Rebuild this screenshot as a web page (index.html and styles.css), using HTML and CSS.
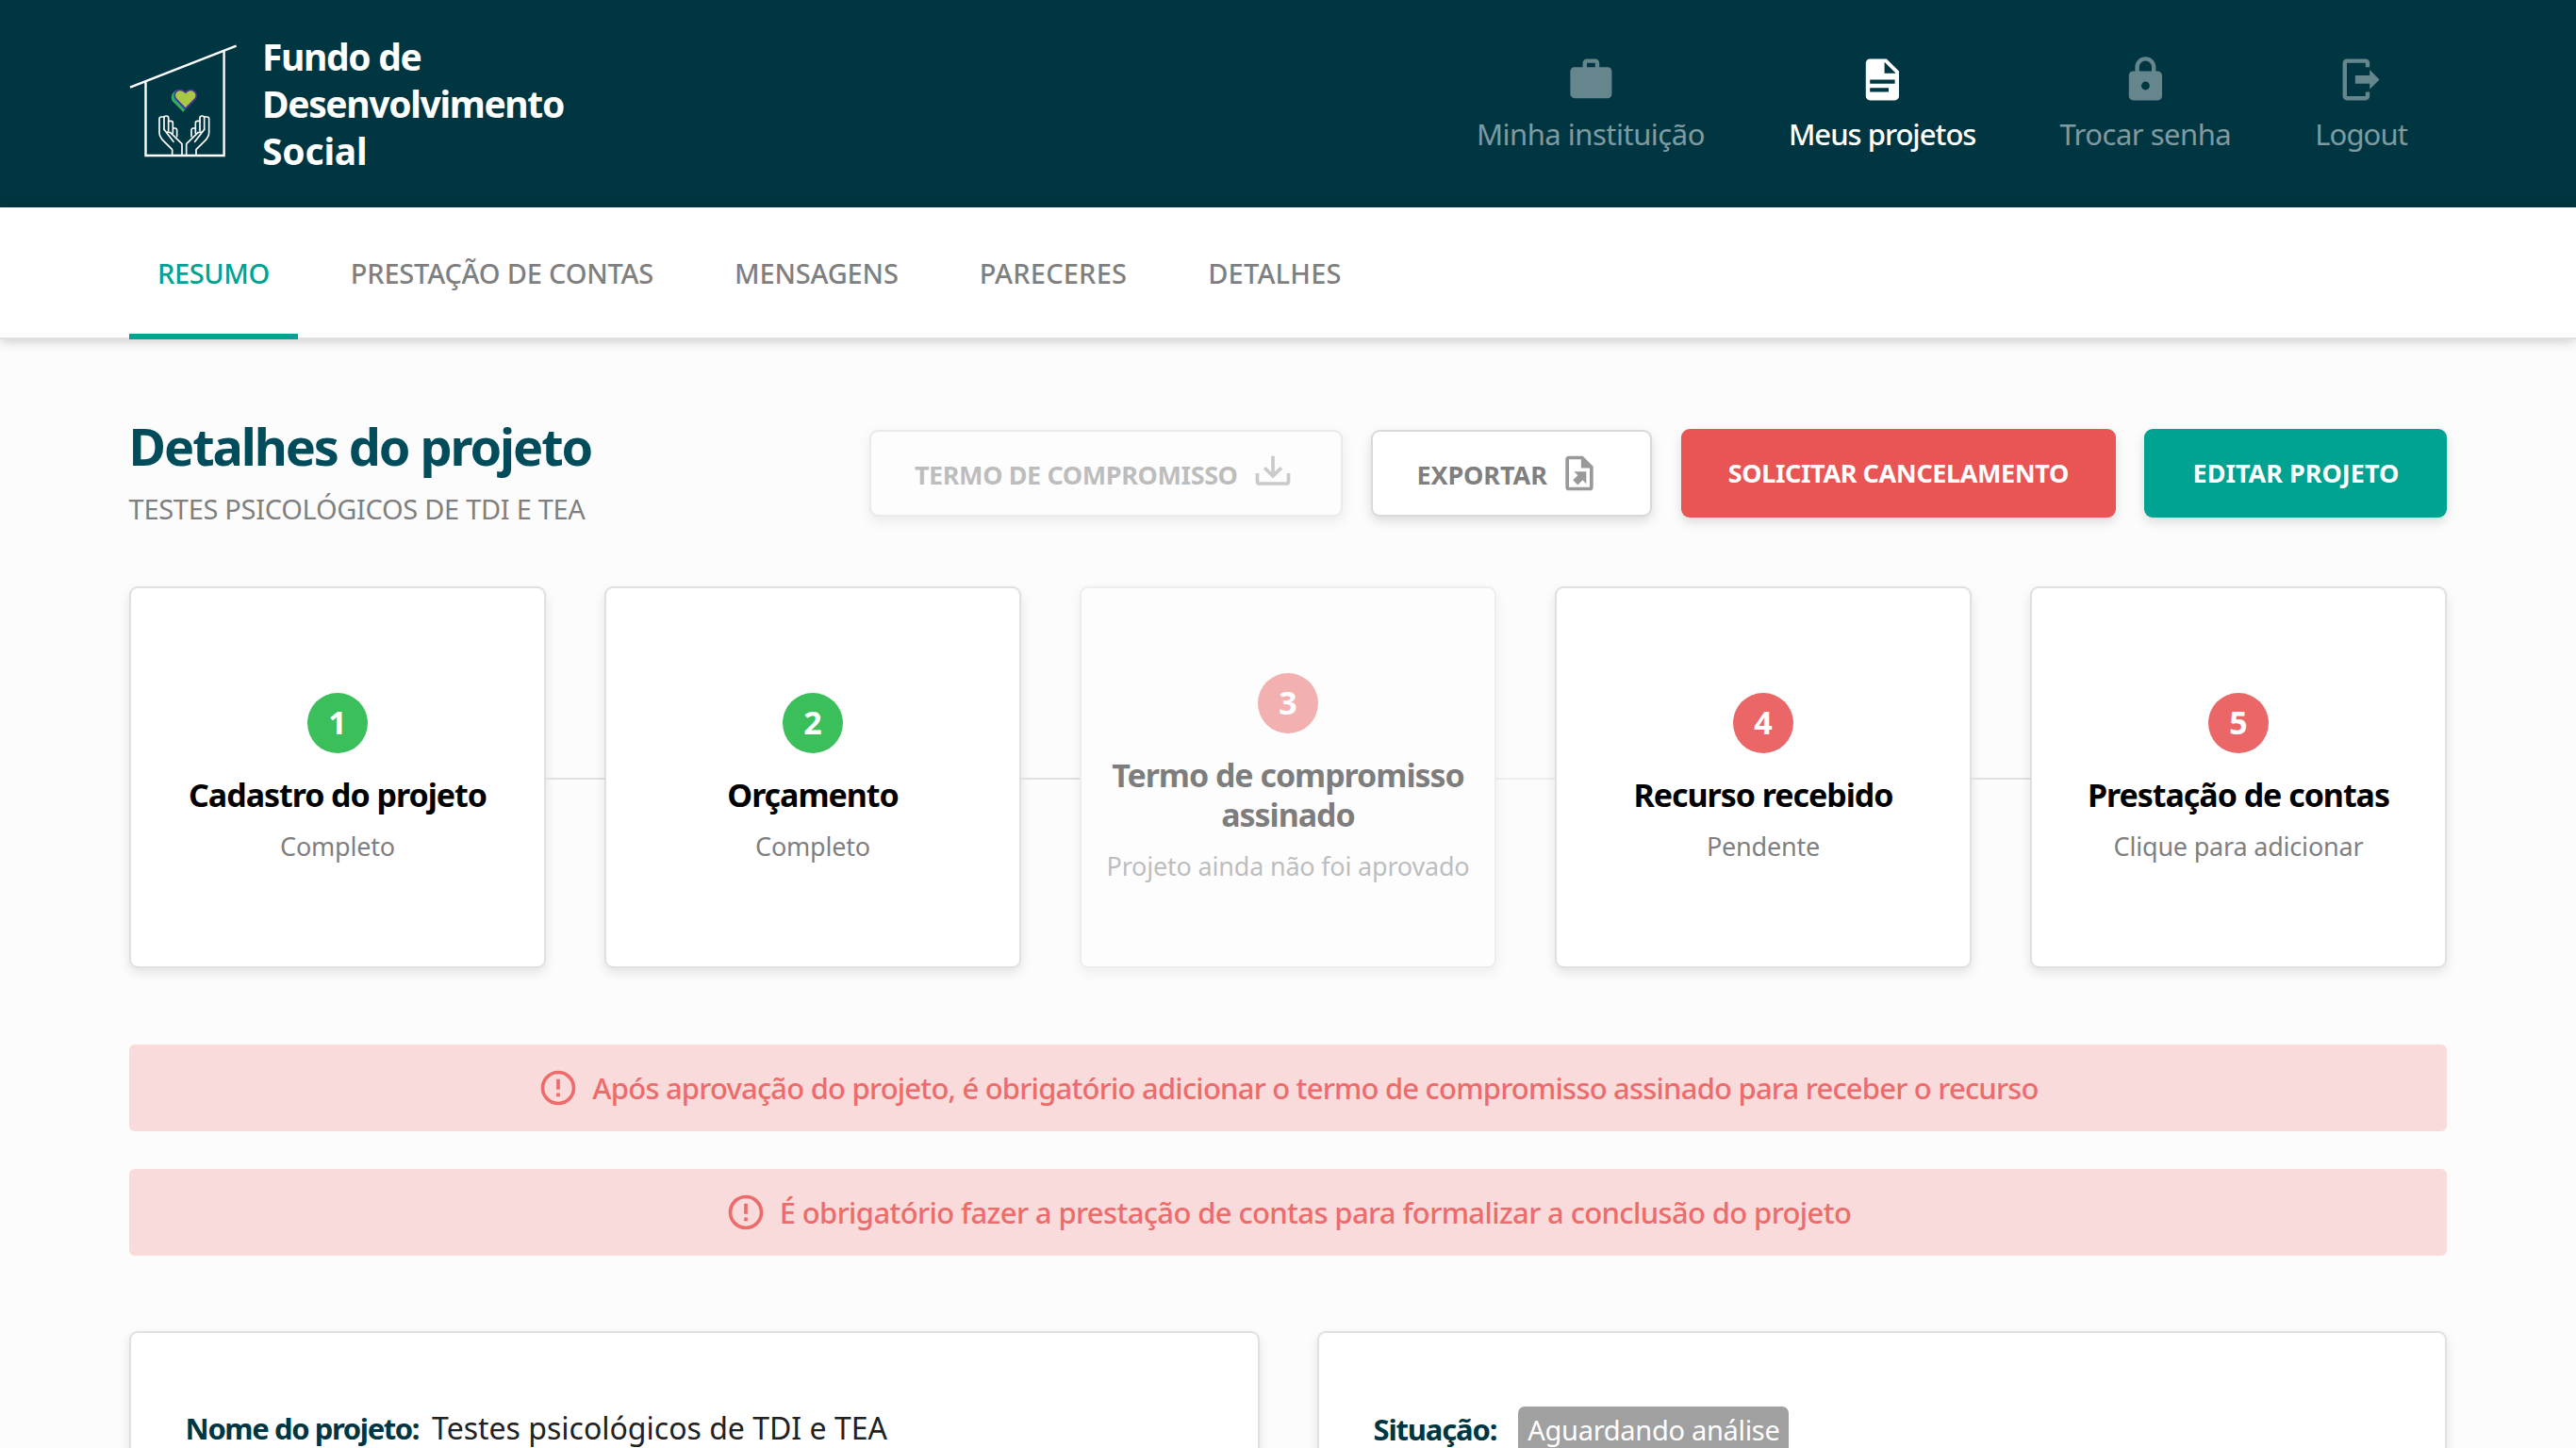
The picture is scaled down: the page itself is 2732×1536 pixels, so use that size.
FILE: index.html
```html
<!DOCTYPE html>
<html lang="pt-BR">
<head>
  <meta charset="utf-8">
  <title>Fundo de Desenvolvimento Social</title>
  <link rel="stylesheet" href="styles.css">
</head>
<body>
  <header class="topbar">
    <a class="brand">
      <svg class="brand-mark" viewBox="136 40 120 140" fill="none" stroke="#fff">
        <path stroke-width="2.4" d="M138 92.7L250.6 48.6M154.5 87V165H237.6V54"/>
        <path d="M194.500 119L182.500 107C180 101 184 96 189 96L203 100Z" fill="#3fae49" stroke="none"/>
        <path d="M195.500 117.500L184 105.500C181.500 99 186 95 190 95L204 100Z" fill="#19a79c" stroke="none"/>
        <path d="M196.700 115.500L186.500 105C182.500 99 189 91.500 196.700 98C204 91.500 211 99 207 105Z" fill="#a9c843" stroke="#47349a" stroke-width="1.800"/>
        <g transform="translate(120 20) scale(.33333)" stroke-width="5" stroke-linejoin="round" stroke-linecap="round">
          <g id="hand">
            <path d="M188 432V416L160 388Q147 374 147 362V318Q147 312 154 312H162"/>
            <path d="M162 352V315Q162 309 169 309Q176 309 176 315V356"/>
            <path d="M162 352L192 391M176 325H183Q190 325 190 331V364M190 348H197Q203 349 203 355V374M172 360L182 362L219 398V432"/>
          </g>
          <use href="#hand" transform="translate(452 0) scale(-1 1)"/>
        </g>
      </svg>
      <span class="brand-name"><span>Fundo de</span><span>Desenvolvimento</span><span class="brand-last">Social</span></span>
    </a>
    <nav class="menu">
      <a class="menu-item">
        <svg viewBox="0 0 24 24"><path d="M10,2H14A2,2 0 0,1 16,4V6H20A2,2 0 0,1 22,8V19A2,2 0 0,1 20,21H4C2.89,21 2,20.1 2,19V8C2,6.89 2.89,6 4,6H8V4C8,2.89 8.89,2 10,2M14,6V4H10V6H14Z"/></svg>
        <span>Minha instituição</span>
      </a>
      <a class="menu-item active">
        <svg viewBox="0 0 24 24"><path d="M13,9H18.5L13,3.5V9M6,2H14L20,8V20A2,2 0 0,1 18,22H6C4.89,22 4,21.1 4,20V4C4,2.89 4.89,2 6,2M15,18V16H6V18H15M18,14V12H6V14H18Z"/></svg>
        <span>Meus projetos</span>
      </a>
      <a class="menu-item">
        <svg viewBox="0 0 24 24"><path d="M12,17A2,2 0 0,0 14,15C14,13.89 13.1,13 12,13A2,2 0 0,0 10,15A2,2 0 0,0 12,17M18,8A2,2 0 0,1 20,10V20A2,2 0 0,1 18,22H6A2,2 0 0,1 4,20V10C4,8.89 4.89,8 6,8H7V6A5,5 0 0,1 12,1A5,5 0 0,1 17,6V8H18M12,3A3,3 0 0,0 9,6V8H15V6A3,3 0 0,0 12,3Z"/></svg>
        <span>Trocar senha</span>
      </a>
      <a class="menu-item menu-logout">
        <svg viewBox="0 0 24 24"><path d="M16,16.700V14H9V10H16V7.300L20.700,12L16,16.700M14,2A2,2 0 0,1 16,4V6H14V4H5V20H14V18H16V20A2,2 0 0,1 14,22H5A2,2 0 0,1 3,20V4A2,2 0 0,1 5,2H14Z"/></svg>
        <span>Logout</span>
      </a>
    </nav>
  </header>

  <nav class="tabs">
    <a class="tab selected">RESUMO</a>
    <a class="tab">PRESTAÇÃO DE CONTAS</a>
    <a class="tab">MENSAGENS</a>
    <a class="tab wide">PARECERES</a>
    <a class="tab wide">DETALHES</a>
  </nav>

  <main class="page">
    <section class="heading">
      <div>
        <h1>Detalhes do projeto</h1>
        <p class="subtitle">TESTES PSICOLÓGICOS DE TDI E TEA</p>
      </div>
      <div class="actions">
        <button class="btn outlined btn-termo" disabled>
          <span>TERMO DE COMPROMISSO</span>
          <svg viewBox="0 0 24 24"><path d="M2 12H4V17H20V12H22V17C22 18.11 21.11 19 20 19H4C2.900 19 2 18.110 2 17V12M12 15L17.550 9.540L16.130 8.130L13 11.250V2H11V11.250L7.880 8.130L6.460 9.550L12 15Z"/></svg>
        </button>
        <button class="btn outlined btn-exportar">
          <span>EXPORTAR</span>
          <svg viewBox="0 0 24 24"><path d="M14,2H6A2,2 0 0,0 4,4V20A2,2 0 0,0 6,22H18A2,2 0 0,0 20,20V8L14,2M18,20H6V4H13V9H18V20M16,11V18.100L13.900,16L11.100,18.800L8.300,16L11.100,13.200L8.900,11H16Z"/></svg>
        </button>
        <button class="btn danger">SOLICITAR CANCELAMENTO</button>
        <button class="btn primary">EDITAR PROJETO</button>
      </div>
    </section>

    <section class="steps">
      <article class="card step done"><b class="number">1</b><h2>Cadastro do projeto</h2><p>Completo</p></article>
      <i class="link"></i>
      <article class="card step done"><b class="number">2</b><h2>Orçamento</h2><p>Completo</p></article>
      <i class="link"></i>
      <article class="card step disabled"><b class="number">3</b><h2>Termo de compromisso assinado</h2><p>Projeto ainda não foi aprovado</p></article>
      <i class="link faint"></i>
      <article class="card step"><b class="number">4</b><h2>Recurso recebido</h2><p>Pendente</p></article>
      <i class="link"></i>
      <article class="card step"><b class="number">5</b><h2>Prestação de contas</h2><p>Clique para adicionar</p></article>
    </section>

    <section class="alerts">
      <div class="alert alert-term">
        <svg viewBox="0 0 24 24"><path d="M11,15H13V17H11V15M11,7H13V13H11V7M12,2C6.470,2 2,6.500 2,12A10,10 0 0,0 12,22A10,10 0 0,0 22,12A10,10 0 0,0 12,2M12,20A8,8 0 0,1 4,12A8,8 0 0,1 12,4A8,8 0 0,1 20,12A8,8 0 0,1 12,20Z"/></svg>
        <span>Após aprovação do projeto, é obrigatório adicionar o termo de compromisso assinado para receber o recurso</span>
      </div>
      <div class="alert">
        <svg viewBox="0 0 24 24"><path d="M11,15H13V17H11V15M11,7H13V13H11V7M12,2C6.470,2 2,6.500 2,12A10,10 0 0,0 12,22A10,10 0 0,0 22,12A10,10 0 0,0 12,2M12,20A8,8 0 0,1 4,12A8,8 0 0,1 12,4A8,8 0 0,1 20,12A8,8 0 0,1 12,20Z"/></svg>
        <span>É obrigatório fazer a prestação de contas para formalizar a conclusão do projeto</span>
      </div>
    </section>

    <section class="details">
      <div class="card detail">
        <span class="label">Nome do projeto:</span>
        <span class="value">Testes psicológicos de TDI e TEA</span>
      </div>
      <div class="card detail">
        <span class="label label-status">Situação:</span>
        <span class="badge">Aguardando análise</span>
      </div>
    </section>
  </main>
</body>
</html>
```
FILE: styles.css
```css
* { box-sizing: border-box; }

body {
  margin: 0;
  height: 1536px;
  overflow: hidden;
  background: #fcfcfc;
  color: #212121;
  font-family: "Noto Sans", "Open Sans", sans-serif;
}

h1, h2, p { margin: 0; }
svg { display: block; flex: none; }

/* Header */
.topbar {
  display: flex;
  align-items: center;
  justify-content: space-between;
  height: 220px;
  padding: 0 136px;
  background: #003641;
  color: #fff;
}
.brand { display: flex; align-items: center; gap: 22px; }
.brand-mark { width: 120px; height: 140px; }
.brand-name {
  display: flex;
  flex-direction: column;
  font-size: 39px;
  font-weight: 700;
  line-height: 50px;
  letter-spacing: -1.35px;
}
.brand-last { letter-spacing: -0.2px; }

.menu { display: flex; gap: 89px; padding: 2px 43px 0 0; }
.menu-item {
  display: flex;
  flex-direction: column;
  align-items: center;
  gap: 10px;
  color: rgba(255, 255, 255, .5);
  font-size: 31px;
  line-height: 44px;
  letter-spacing: -0.5px;
}
.menu-item svg { width: 52.8px; height: 52.8px; fill: rgba(255, 255, 255, .4); }
.menu-item.active { color: #fff; font-weight: 500; letter-spacing: -1px; }
.menu-item.active svg { fill: #fff; }
.menu-logout { letter-spacing: -0.9px; }

/* Tabs */
.tabs {
  display: flex;
  gap: 26px;
  height: 140px;
  padding: 0 137px;
  background: #fff;
  box-shadow: inset 0 -2px #e0e0e0, 0 2px 12px rgba(0, 0, 0, .2);
}
.tab {
  padding: 0 30px;
  color: #7f7f7f;
  font-size: 29px;
  font-weight: 500;
  line-height: 140px;
  letter-spacing: -0.2px;
}
.tab.selected { color: #00a291; letter-spacing: -0.4px; box-shadow: inset 0 -6px #00a291; }
.tab.wide { letter-spacing: 0.2px; }

/* Page heading */
.page { padding: 81px 136.6px 0; }
.heading { display: flex; align-items: center; justify-content: space-between; }
h1 {
  color: #004c5a;
  font-size: 54px;
  font-weight: 700;
  line-height: 64px;
  letter-spacing: -2.1px;
}
.subtitle {
  margin-top: 13px;
  color: #7f7f7f;
  font-size: 29px;
  line-height: 44px;
  letter-spacing: -0.3px;
}

.actions { display: flex; align-items: center; gap: 30.5px; }
.btn {
  display: flex;
  align-items: center;
  justify-content: center;
  height: 94px;
  padding: 0;
  border: 0;
  border-radius: 9px;
  color: #fff;
  font-family: inherit;
  font-size: 27px;
  font-weight: 700;
  line-height: 40px;
  letter-spacing: -0.4px;
  box-shadow: 0 5px 12px rgba(0, 0, 0, .13);
}
.danger { width: 461px; background: #e95454; }
.primary { width: 321px; background: #00a291; letter-spacing: 0; }
.outlined {
  justify-content: flex-start;
  height: 92px;
  padding-left: 46px;
  border: 2px solid #d9d9d9;
  background: #fff;
  color: #7f7f7f;
}
.outlined span { padding-top: 4px; }
.outlined svg { width: 44px; height: 44px; fill: #999; }
.outlined:disabled { opacity: .5; }
.btn-termo { width: 502px; gap: 15px; }
.btn-exportar { width: 298px; gap: 12px; letter-spacing: -0.1px; }

/* Cards */
.card {
  border: 2px solid #e0e0e0;
  border-radius: 9px;
  background: #fff;
  box-shadow: 0 5px 12px rgba(0, 0, 0, .1);
}
.steps { display: flex; align-items: center; margin-top: 60px; }
.link { flex: none; width: 61.2px; height: 2px; margin-top: 3px; background: #e0e0e0; }
.link.faint { background: #eee; }
.step {
  flex: 1 1 0;
  display: flex;
  flex-direction: column;
  align-items: center;
  justify-content: center;
  height: 405px;
  padding: 0 26px;
  text-align: center;
}
.number {
  width: 64px;
  height: 64px;
  border-radius: 50%;
  background: #eb6666;
  color: #fff;
  font-size: 34px;
  line-height: 62px;
}
.done .number { background: #3bbf5b; }
.step h2 {
  margin: 23px 0 18px;
  color: #000;
  font-size: 34px;
  font-weight: 700;
  line-height: 42px;
  letter-spacing: -1.05px;
}
.step p { color: #7f7f7f; font-size: 27px; line-height: 32px; letter-spacing: -0.2px; white-space: nowrap; }
.disabled { opacity: .5; }

/* Alerts */
.alerts { display: grid; gap: 40px; margin-top: 81px; }
.alert {
  display: flex;
  align-items: center;
  justify-content: center;
  gap: 14px;
  height: 92px;
  border-radius: 6px;
  background: #f9dbdb;
  color: #ed6b6b;
  font-size: 31px;
  font-weight: 500;
  letter-spacing: -0.63px;
}
.alert svg { width: 44px; height: 44px; fill: currentColor; }
.alert-term { letter-spacing: -0.8px; }

/* Project details */
.details { display: grid; grid-template-columns: 1fr 1fr; gap: 61px; margin-top: 80px; }
.detail { display: flex; align-items: baseline; height: 400px; padding: 78px 58px; line-height: 46px; }
.label { margin-right: 14px; color: #003641; font-size: 31px; font-weight: 700; letter-spacing: -1.4px; }
.label-status { margin-right: 23px; letter-spacing: -1.15px; }
.value { font-size: 32px; }
.badge {
  padding: 0 9px 0 10px;
  border-radius: 7px;
  background: #a0a0a0;
  color: #fff;
  font-size: 29px;
  line-height: 50px;
  letter-spacing: -0.3px;
}
```
